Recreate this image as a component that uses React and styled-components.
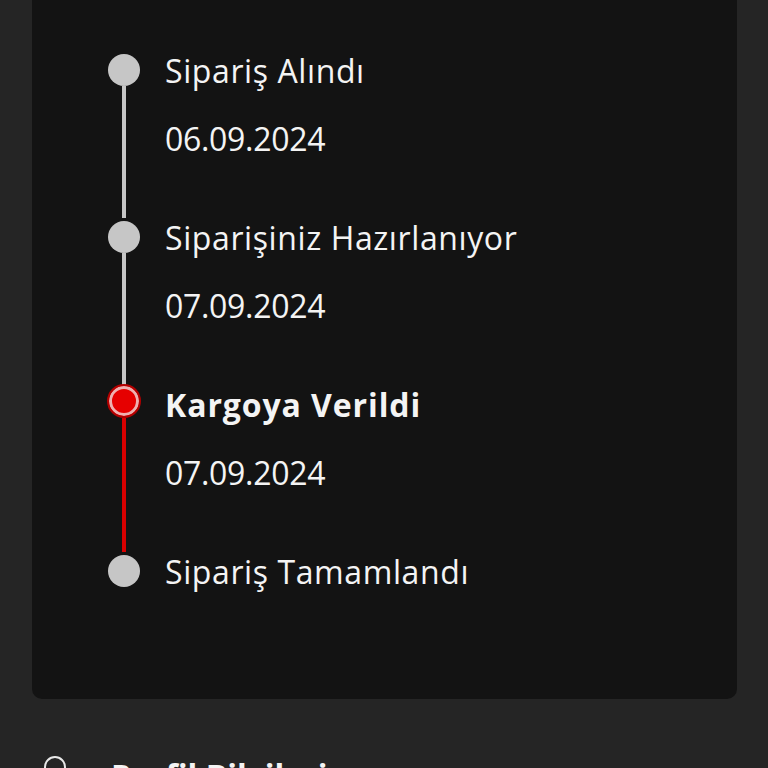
import styled, { createGlobalStyle } from 'styled-components'

const GlobalStyle = createGlobalStyle`
    html, body {
        margin: 0;
        padding: 0;
        background: #252525;
        overflow: hidden;
        font-family: "Open Sans", "Noto Sans", sans-serif;
    }
`

const steps = [
    { title: 'Sipariş Alındı', date: '06.09.2024', state: 'done' },
    { title: 'Siparişiniz Hazırlanıyor', date: '07.09.2024', state: 'done' },
    { title: 'Kargoya Verildi', date: '07.09.2024', state: 'active' },
    { title: 'Sipariş Tamamlandı', state: 'pending' },
]

export default function App(){
    return(
        <>
            <GlobalStyle />
            <Page>
                <Card>
                    <Timeline>
                        {steps.map((step, i) => {
                            const last = i === steps.length - 1
                            return (
                                <Step key={step.title} $last={last}>
                                    <Rail>
                                        <Dot $active={step.state === 'active'} />
                                        {!last && <Line $red={step.state === 'active'} />}
                                    </Rail>
                                    <Content>
                                        <Title $bold={step.state === 'active'}>{step.title}</Title>
                                        {step.date && <DateText>{step.date}</DateText>}
                                    </Content>
                                </Step>
                            )
                        })}
                    </Timeline>
                </Card>
                <ProfileRow>
                    <svg width="24" height="40" viewBox="0 0 24 40" fill="none" stroke="#e8e8e8" strokeWidth="2">
                        <circle cx="12" cy="11" r="10" />
                        <path d="M-6 44 C-6 32 2 25 12 25 C22 25 30 32 30 44" />
                    </svg>
                    <ProfileText>Profil Bilgileri</ProfileText>
                </ProfileRow>
            </Page>
        </>
    )
}

const Page = styled.div`
    width: 768px;
    height: 768px;
    overflow: hidden;
`

const Card = styled.div`
    margin: 0 31px 0 32px;
    background: #131313;
    border-radius: 0 0 10px 10px;
    padding: 51px 0 107px 76px;
`

const Timeline = styled.div`
    display: flex;
    flex-direction: column;
`

const Step = styled.div`
    display: flex;
    gap: 25px;
    min-height: ${p => p.$last ? 'auto' : '167px'};
`

const Rail = styled.div`
    width: 32px;
    display: flex;
    flex-direction: column;
    align-items: center;
    padding-top: ${p => p.$active ? '0' : '3px'};
`

const Dot = styled.div`
    width: ${p => p.$active ? '34px' : '32px'};
    height: ${p => p.$active ? '34px' : '32px'};
    margin-top: ${p => p.$active ? '-4px' : '0'};
    border-radius: 50%;
    box-sizing: border-box;
    flex-shrink: 0;
    background: ${p => p.$active ? '#e60000' : '#c6c6c6'};
    border: ${p => p.$active ? '2px solid #b30000' : 'none'};
    box-shadow: ${p => p.$active ? 'inset 0 0 0 3px #eeb0b0' : 'none'};
`

const Line = styled.div`
    flex: 1;
    width: 4px;
    background: ${p => p.$red ? '#d90000' : '#c6c6c6'};
`

const Content = styled.div`
    display: flex;
    flex-direction: column;
    gap: 28px;
    color: #f4f4f4;
`

const Title = styled.div`
    font-size: 32px;
    line-height: 40px;
    font-weight: ${p => p.$bold ? 700 : 400};
    letter-spacing: ${p => p.$bold ? '0.9px' : '0.6px'};
`

const DateText = styled.div`
    font-size: 32px;
    line-height: 40px;
    letter-spacing: -0.3px;
`

const ProfileRow = styled.div`
    display: flex;
    align-items: flex-start;
    gap: 44px;
    margin-top: 57px;
    padding-left: 43px;
`

const ProfileText = styled.div`
    font-size: 32px;
    line-height: 40px;
    font-weight: 700;
    color: #f4f4f4;
`
